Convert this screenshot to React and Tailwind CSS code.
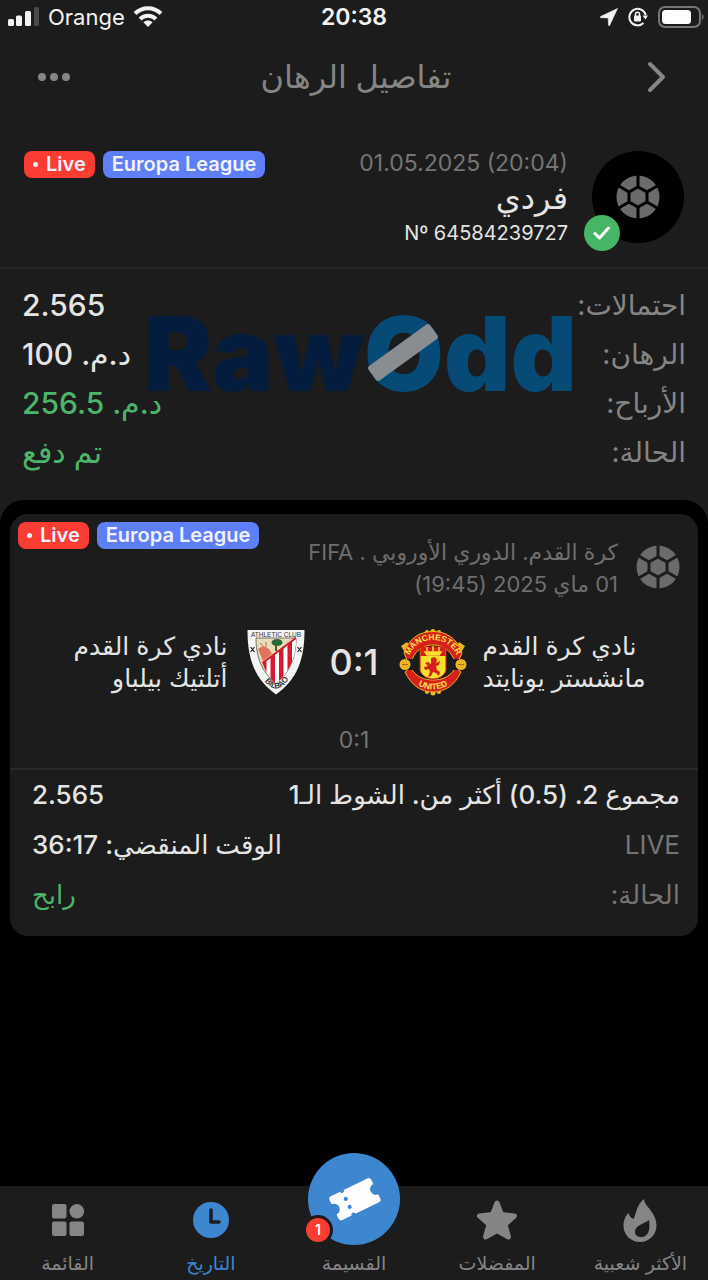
'use client';

const tickets = [
  { label: 'احتمالات:', value: '2.565' },
  { label: 'الرهان:', value: 'د.م. 100' },
  { label: 'الأرباح:', value: 'د.م. 256.5', win: true },
  { label: 'الحالة:', value: 'تم دفع', win: true },
];

function StatusBar() {
  return (
    <div dir="ltr" className="grid h-8 grid-cols-3 items-center px-1 text-[#f2f2f2]">
      <div className="flex items-center gap-2 pl-1">
        <svg width="32" height="20" viewBox="0 0 32 20" fill="currentColor">
          <rect x="0" y="12" width="6" height="7" rx="1.5" />
          <rect x="8" y="8.500" width="6" height="10.500" rx="1.5" />
          <rect x="17" y="4" width="6" height="15" rx="1.5" />
          <rect x="26" y="0" width="5" height="19" rx="1.5" fill="#4a4a4a" />
        </svg>
        <span className="text-[22px]">Orange</span>
        <svg width="30" height="22" viewBox="0 0 30 22" fill="none" stroke="currentColor" strokeWidth="4">
          <path d="M2 7.5C9.500 .5 20.500 .5 28 7.500" />
          <path d="M7 13C11.500 8.500 18.500 8.500 23 13" />
          <path d="M15 21l-4.600-4.800c2.600-2.400 6.600-2.400 9.200 0z" fill="currentColor" stroke="none" />
        </svg>
      </div>
      <span className="text-center text-[23px] font-semibold">20:38</span>
      <div className="flex items-center justify-end gap-[10px]">
        <svg width="18" height="18" viewBox="0 0 18 18" fill="currentColor">
          <path d="M17.500 .5L.6 8.500c-.6.4-.4 1.200.3 1.200l7.300.2.3 7.200c0 .7.900.8 1.200.2z" stroke="currentColor" strokeWidth=".6" />
        </svg>
        <svg width="20" height="20" viewBox="0 0 20 20" fill="none" stroke="currentColor" strokeWidth="2">
          <path d="M15.500 16A8.300 8.300 0 1 1 17.700 8" />
          <path d="M14.500 8.500h5.500l-2.600 4z" fill="currentColor" stroke="none" />
          <rect x="6" y="8.500" width="7" height="6" rx="1" fill="currentColor" stroke="none" />
          <path d="M7.500 9V7.300a2 2 0 0 1 4 0V9" strokeWidth="1.500" />
        </svg>
        <svg width="46" height="22" viewBox="0 0 46 22">
          <rect x="1" y="1" width="41" height="20" rx="6" fill="none" stroke="#777" strokeWidth="2" />
          <rect x="4" y="4" width="29" height="14" rx="3.500" fill="#fff" />
          <path d="M44 8c2 1 2 5 0 6z" fill="#777" />
        </svg>
      </div>
    </div>
  );
}

function Ball({ className }) {
  return (
    <svg viewBox="-22 -22 44 44" className={className}>
      <circle r="21.500" fill="#6b6b6d" />
      <g stroke="currentColor" strokeWidth="3" fill="none">
        <path d="M0-10L9-5v10L0 10-9 5V-5z" />
        <path d="M0-10V-22M0 10V22M9-5L20-11.500M9 5L20 11.500M-9-5L-20-11.500M-9 5L-20 11.500" />
      </g>
    </svg>
  );
}

function Badges() {
  return (
    <div dir="ltr" className="flex gap-2 text-[20px] leading-[27px] font-semibold text-[#f1f1ff]">
      <span className="flex items-center gap-2 rounded-lg bg-[#fb3c33] px-[9px]">
        <span className="size-[5px] rounded-full bg-current" />
        Live
      </span>
      <span className="rounded-lg bg-[#5f7ff8] px-[9px]">Europa League</span>
    </div>
  );
}

function UnitedCrest() {
  return (
    <svg width="68" height="68" viewBox="0 0 68 68">
      <g fill="#e8b820">
        <circle cx="34" cy="3.500" r="2.500" /><circle cx="28" cy="4" r="2" /><circle cx="40" cy="4" r="2" />
        <circle cx="34" cy="65" r="2.500" /><circle cx="28" cy="64" r="2" /><circle cx="40" cy="64" r="2" />
        <path d="M2 18l6-4 3 5-6 4zM66 18l-6-4-3 5 6 4z" />
      </g>
      <path d="M5 25C10 10 21 3.500 34 3.500S58 10 63 25l-3 7H8z" fill="#d81f1b" stroke="#e8b820" strokeWidth="1" />
      <path d="M6 44c6 13 16 20 28 20s22-7 28-20l-6-5H12z" fill="#d81f1b" stroke="#e8b820" strokeWidth="1" />
      <path d="M13 31c5-10 12-14 21-14s16 4 21 14v11c-5 7-12 10-21 10s-16-3-21-10z" fill="#1c1c1c" stroke="#e8b820" strokeWidth="1" />
      <path d="M4 31h11v11H4zM53 31h11v11H53z" fill="#1c1c1c" />
      <circle cx="6" cy="36.500" r="5.500" fill="#f0b323" />
      <circle cx="62" cy="36.500" r="5.500" fill="#f0b323" />
      <path d="M3 36.500h6M59 36.500h6" stroke="#a46c10" />
      <path d="M21 19h26v24c-3 6-8 8-13 8s-10-2-13-8z" fill="#f9e02c" stroke="#c8141a" />
      <path d="M21.500 19h25v9h-25z" fill="#d81f1b" />
      <path d="M26 24h16l-2 3H28zM28 23v-4M34 23v-5M40 23v-4" fill="#f9e02c" stroke="#f9e02c" strokeWidth="1.500" />
      <path d="M32 30l4-1 2 3-1 3 4-2-1 4-3 1 1 4 3 2-1 4-3-3-3-1-2 4-3 1 2-5-1-3-4 1-1-3 4-1-3-3 3-1 3 2z" fill="#d81f1b" />
      <path id="unitedTop" d="M10.500 27C15.500 16.500 24 12 34 12S52.500 16.500 57.500 27" fill="none" />
      <path id="unitedBottom" d="M11 49.500C23 65.500 45 65.500 57 49.500" fill="none" />
      <g fill="#ffe04a" fontFamily="Liberation Sans, sans-serif" fontWeight="700" fontSize="8.500" textAnchor="middle">
        <text dir="ltr"><textPath href="#unitedTop" startOffset="50%">MANCHESTER</textPath></text>
        <text dir="ltr"><textPath href="#unitedBottom" startOffset="50%">UNITED</textPath></text>
      </g>
    </svg>
  );
}

function AthleticCrest() {
  return (
    <svg width="58" height="66" viewBox="0 0 58 66">
      <defs>
        <clipPath id="stripes">
          <path d="M49 9c0 18-5 33-20 46C22 49 18 41 15.500 34z" />
        </clipPath>
      </defs>
      <path d="M.5 1h57c0 29-7 49-28.500 64.500C7.500 50 .5 30 .5 1z" fill="#f4f4f4" />
      <path d="M9 9h40c0 18-5 33-20 46C14 42 9 27 9 9z" fill="#e9dcb9" stroke="#555" strokeWidth=".8" />
      <g clipPath="url(#stripes)">
        <path d="M10 5h40v55H10z" fill="#fff" />
        <path d="M15 5h4.500v55H15zM23.500 5H28v55h-4.500zM32 5h4.500v55H32zM40.500 5H45v55h-4.500z" fill="#d9182d" />
      </g>
      <path d="M49 9L15.500 34" stroke="#d9182d" strokeWidth="2" />
      <path d="M11 20l5-3 6 3 3 5-9 7z" fill="#e2735a" />
      <path d="M13 14l3 3M19 13v6" stroke="#bd6c4c" />
      <ellipse cx="30" cy="13.500" rx="5.500" ry="3.500" fill="#286b3b" />
      <path d="M29 16v6" stroke="#4b5e2b" strokeWidth="2" />
      <path d="M3.500 18l4 5M7.500 18l-4 5M50.500 18l4 5M54.500 18l-4 5" stroke="#222" strokeWidth="1.200" />
      <path id="bilbao" d="M15 48Q30 72 44 46" fill="none" />
      <g fill="#333" fontFamily="Liberation Sans, sans-serif" textAnchor="middle">
        <text dir="ltr" x="29" y="7.500" fontSize="6.500">ATHLETIC CLUB</text>
        <text dir="ltr" fontSize="8" fontWeight="700"><textPath href="#bilbao" startOffset="50%">BILBAO</textPath></text>
      </g>
    </svg>
  );
}

function Watermark() {
  return (
    <div dir="ltr" className="pointer-events-none absolute top-9 left-36 text-[103px] leading-[98px] font-black text-[#041c3d]">
      Raw
      <span className="text-[#064a76]">
        <span className="relative">
          O
          <svg viewBox="0 0 72 60" className="absolute top-8 left-1 h-[60px] w-[72px]">
            <rect x="-3" y="20.500" width="76" height="18" rx="3" fill="#878d91" transform="rotate(-36 35 29.500)" />
          </svg>
        </span>
        dd
      </span>
    </div>
  );
}

function NavItem({ label, active, children }) {
  return (
    <a href="#" className={`flex flex-1 flex-col items-center gap-2 pt-3 text-[19px] leading-7 ${active ? 'text-[#3d87d0]' : 'text-[#858587]'}`}>
      <span className="flex h-11 items-center">{children}</span>
      {label}
    </a>
  );
}

export default function App() {
  return (
    <div dir="rtl" className="flex min-h-screen flex-col overflow-hidden bg-black font-['Inter','DejaVu_Sans',sans-serif] text-[#e4e4e4]">
      <div className="bg-[#1c1c1c] pb-[47px]">
        <StatusBar />
        <header className="flex h-[90px] items-center justify-between px-9">
          <button type="button" aria-label="رجوع" className="text-[#858585]">
            <svg width="32" height="36" viewBox="0 0 32 36" fill="none" stroke="currentColor" strokeWidth="4" strokeLinecap="round" strokeLinejoin="round">
              <path d="M10 5l13 13-13 13" />
            </svg>
          </button>
          <h1 className="text-[32px] leading-10 font-medium text-[#858585]">تفاصيل الرهان</h1>
          <button type="button" aria-label="المزيد" className="text-[#858585]">
            <svg width="36" height="10" viewBox="0 0 36 10" fill="currentColor">
              <circle cx="6" cy="5" r="4" />
              <circle cx="18" cy="5" r="4" />
              <circle cx="30" cy="5" r="4" />
            </svg>
          </button>
        </header>

        <section className="flex items-start gap-6 border-b-2 border-[#282828] px-6 pt-[29px] pb-[22px]">
          <div className="relative flex size-[92px] items-center justify-center rounded-full bg-black">
            <Ball className="size-11 text-black" />
            <span className="absolute -bottom-2 -left-2 flex size-9 items-center justify-center rounded-full bg-[#46b566]">
              <svg width="18" height="16" viewBox="0 0 18 16" fill="none" stroke="#fff" strokeWidth="3" strokeLinecap="round" strokeLinejoin="round">
                <path d="M2 8.500l4.500 4.500L15.500 3" />
              </svg>
            </span>
          </div>
          <div className="flex flex-col">
            <span dir="ltr" className="text-[23px] leading-6 text-[#757575]">01.05.2025 (20:04)</span>
            <span className="text-[32px] leading-[46px] font-medium">فردي</span>
            <span dir="ltr" className="text-right text-[20px] leading-6">Nº 64584239727</span>
          </div>
          <div className="ms-auto">
            <Badges />
          </div>
        </section>

        <section className="relative pt-3">
          <dl className="px-[22px] text-[28px] leading-[49px]">
            {tickets.map((row) => (
              <div key={row.label} className="flex justify-between">
                <dt className="text-[#858585]">{row.label}</dt>
                <dd className={row.win ? 'text-[30px] font-medium text-[#4db56b]' : 'text-[30px] font-medium'}>{row.value}</dd>
              </div>
            ))}
          </dl>
          <Watermark />
        </section>
      </div>

      <main className="relative -mt-6 flex-1 rounded-t-3xl bg-black px-[10px] pt-[14px]">
        <article className="rounded-[18px] bg-[#1c1c1c] pb-4">
          <div className="flex items-start gap-[18px] pt-2 pr-[18px] pl-2">
            <Ball className="mt-[23px] size-11 text-[#1c1c1c]" />
            <p className="mt-[14px] text-[22px] leading-8 text-[#6e6e6e]">
              كرة القدم. الدوري الأوروبي . FIFA
              <br />
              01 ماي 2025 (19:45)
            </p>
            <div className="ms-auto">
              <Badges />
            </div>
          </div>

          <div className="grid grid-cols-[1fr_auto_1fr] items-center px-3 pt-7">
            <div className="flex items-center justify-end gap-4">
              <p className="text-left text-[25px] leading-8">نادي كرة القدم<br />مانشستر يونايتد</p>
              <UnitedCrest />
            </div>
            <span dir="ltr" className="px-5 text-[36px] leading-10 font-medium">0:1</span>
            <div className="flex items-center gap-5 pr-1">
              <AthleticCrest />
              <p className="text-[25px] leading-8">نادي كرة القدم<br />أتلتيك بيلباو</p>
            </div>
          </div>
          <p dir="ltr" className="pt-7 pb-3 text-center text-[23px] leading-8 text-[#757575]">0:1</p>

          <dl className="border-t-2 border-[#282828] pr-[18px] pl-[22px] text-[26px] leading-[50px]">
            <div className="flex justify-between">
              <dt className="font-medium">مجموع 2. (0.5) أكثر من. الشوط الـ1</dt>
              <dd className="font-medium">2.565</dd>
            </div>
            <div className="flex justify-between">
              <dt className="text-[#757575]">LIVE</dt>
              <dd className="font-medium">الوقت المنقضي: 36:17</dd>
            </div>
            <div className="flex justify-between">
              <dt className="text-[#757575]">الحالة:</dt>
              <dd className="font-medium text-[#4db56b]">رابح</dd>
            </div>
          </dl>
        </article>
      </main>

      <nav className="relative -mx-1 flex h-[94px] bg-[#1c1c1c]">
        <NavItem label="الأكثر شعبية">
          <svg width="34" height="43" viewBox="0 0 34 43" fill="currentColor">
            <path fillRule="evenodd" d="M21 0c0 7 12.500 13 12.500 26.500C33.500 36 26 43 17 43S.5 36 .5 27c0-6 2-10 5-13 1 3 2 5 5 6C13.500 15 13 6 21 0zM26 21c-5 4-14 5-14 12 0 3 2.500 5 6.500 5 7 0 9-8 7.500-17z" />
          </svg>
        </NavItem>
        <NavItem label="المفضلات">
          <svg width="42" height="42" viewBox="0 0 42 42" fill="currentColor" stroke="currentColor" strokeWidth="5" strokeLinejoin="round">
            <path d="M21 4l4.500 11.500L38.500 17l-9.500 8.500L32.500 38 21 31.500 9.500 38 13 25.500 3.500 17l13-1.500z" />
          </svg>
        </NavItem>
        <NavItem label="القسيمة">
          <span className="absolute -top-[33px] left-1/2 flex size-[92px] -translate-x-1/2 items-center justify-center rounded-full bg-[#3d87d0]">
            <svg width="53" height="53" viewBox="-28 -28 56 56">
              <g transform="rotate(-26)">
                <path d="M-21-14H22a3 3 0 0 1 3 3v5a6 6 0 0 0 0 12v5a3 3 0 0 1-3 3H-21a3 3 0 0 1-3-3V6a6 6 0 0 0 0-12v-5a3 3 0 0 1 3-3z" fill="#fff" />
                <g fill="#3d87d0">
                  <circle cx="-8" cy="-14" r="2.200" />
                  <circle cx="-8" cy="-4.700" r="2.200" />
                  <circle cx="-8" cy="4.700" r="2.200" />
                  <circle cx="-8" cy="14" r="2.200" />
                </g>
              </g>
            </svg>
            <span className="absolute bottom-0 -left-[5px] flex size-[30px] items-center justify-center rounded-full border-[3px] border-[#1c1c1c] bg-[#fb3c33] text-[14px] font-semibold text-white">1</span>
          </span>
        </NavItem>
        <NavItem label="التاريخ" active>
          <svg width="36" height="36" viewBox="0 0 36 36">
            <circle cx="18" cy="18" r="18" fill="currentColor" />
            <path d="M18 8v12h8" fill="none" stroke="#1c1c1c" strokeWidth="3.500" strokeLinecap="round" strokeLinejoin="round" />
          </svg>
        </NavItem>
        <NavItem label="القائمة">
          <svg width="32" height="32" viewBox="0 0 32 32" fill="currentColor">
            <rect width="14.500" height="14.500" rx="2" />
            <circle cx="24.800" cy="7.300" r="7.300" />
            <rect y="17.500" width="14.500" height="14.500" rx="2" />
            <rect x="17.500" y="17.500" width="14.500" height="14.500" rx="2" />
          </svg>
        </NavItem>
      </nav>
    </div>
  );
}
